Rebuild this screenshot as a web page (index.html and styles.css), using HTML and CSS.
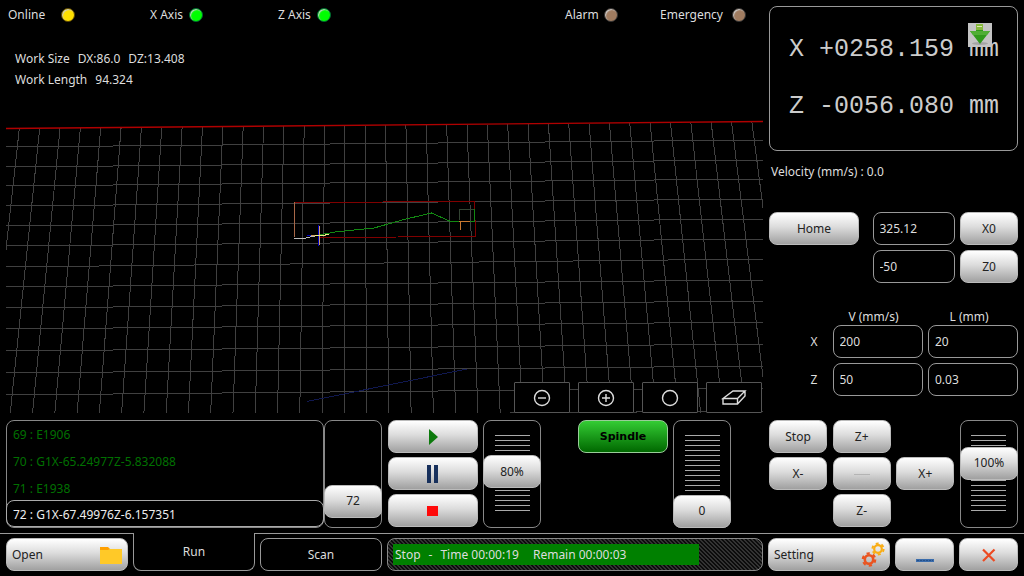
FILE: index.html
```html
<!DOCTYPE html>
<html lang="en">
<head>
<meta charset="UTF-8">
<meta name="viewport" content="width=device-width, initial-scale=1.0">
<title>Lathe Control</title>
<link rel="stylesheet" href="styles.css">
</head>
<body>

<main>
  <section class="view">
    <div class="status-bar">
      <div class="status status-online"><span>Online</span><i class="led yellow"></i></div>
      <div class="status"><span>X Axis</span><i class="led green"></i></div>
      <div class="status"><span>Z Axis</span><i class="led green"></i></div>
      <div class="status status-alarm"><span>Alarm</span><i class="led"></i></div>
      <div class="status status-emergency"><span>Emergency</span><i class="led"></i></div>
    </div>

    <div class="work-info">
      <p><span>Work Size</span><span>DX:86.0</span><span>DZ:13.408</span></p>
      <p><span>Work Length</span><span>94.324</span></p>
    </div>

    <svg class="scene" viewBox="6 116 757 297" preserveAspectRatio="none">
      <g id="grid" class="grid"></g>
      <path class="top-edge" d="M6 128.5L763 121.5"/>
      <path class="axis" d="M307 401.5L467 369"/>
      <path class="stock" d="M294.5 202.5L474.5 201.5L475.5 236.5L320 237.5"/>
      <path class="ghost" d="M459.5 220V209.5H474"/>
      <path class="stock-left" d="M294.5 202V237"/>
      <path class="done" d="M294 238H306L319 235"/>
      <path class="tool-path" d="M319 235L335 232L374 228L404 219.5L431.500 213L450.500 221.500H474.500V209"/>
      <path class="tool" d="M459 221.500H470M460.500 221V230"/>
      <path class="cursor-z" d="M307 235.500H322M318.500 225V246"/>
      <path class="cursor-x" d="M311 235.500H326M319.500 226V245"/>
      <path class="cursor-y" d="M315 235.500H321L329 234.500"/>
    </svg>

    <div class="view-tools">
      <button type="button" aria-label="Zoom out">
        <svg width="18" height="18" viewBox="0 0 18 18"><circle cx="9" cy="9" r="7.500"/><path d="M5 9H13"/></svg>
      </button>
      <button type="button" aria-label="Zoom in">
        <svg width="18" height="18" viewBox="0 0 18 18"><circle cx="9" cy="9" r="7.500"/><path d="M5 9H13M9 5V13"/></svg>
      </button>
      <button type="button" aria-label="Reset view">
        <svg width="18" height="18" viewBox="0 0 18 18"><circle cx="9" cy="9" r="7.500"/></svg>
      </button>
      <button type="button" aria-label="3D view">
        <svg width="26" height="18" viewBox="0 0 26 18"><path d="M2 9.500L12 2H24L16.500 9.500ZM2 9.500V15H16.500V9.500M16.500 15L24 7V2"/></svg>
      </button>
    </div>
  </section>

  <section class="side">
    <div class="readout">
      <p>X +0258.159 mm</p>
      <p>Z -0056.080 mm</p>
      <svg class="download" width="24" height="24" viewBox="0 0 24 24">
        <rect width="24" height="24" fill="#c4c4c4"/>
        <ellipse cx="12" cy="20.500" rx="8" ry="1.500" fill="#a4a4a4"/>
        <path d="M8 1H15V8H22L12 21L2 8H8Z" fill="#2f9a1c"/>
        <path d="M2 8H22L19 12H5Z" fill="#4fae35"/>
        <path d="M8 1H15V7H8Z" fill="#86b93c"/>
        <path d="M9 3.500H14" stroke="#dcecb0"/>
      </svg>
    </div>

    <p class="velocity">Velocity (mm/s) : 0.0</p>

    <div class="offsets">
      <button type="button" class="btn">Home</button>
      <input type="text" value="325.12" aria-label="X offset">
      <button type="button" class="btn">X0</button>
      <input type="text" class="second" value="-50" aria-label="Z offset">
      <button type="button" class="btn">Z0</button>
    </div>

    <div class="steps">
      <span class="head-v">V (mm/s)</span>
      <span>L (mm)</span>
      <label for="vx">X</label>
      <input type="text" id="vx" value="200">
      <input type="text" value="20" aria-label="X length">
      <label for="vz">Z</label>
      <input type="text" id="vz" value="50">
      <input type="text" value="0.03" aria-label="Z length">
    </div>
  </section>

  <section class="controls">
    <ol class="log">
      <li>69 : E1906</li>
      <li>70 : G1X-65.24977Z-5.832088</li>
      <li>71 : E1938</li>
      <li class="current">72 : G1X-67.49976Z-6.157351</li>
    </ol>
    <div class="slider">
      <input type="range" class="down" min="0" max="83" value="72" id="line" aria-label="Program line">
      <output for="line" style="--pos: 0.867">72</output>
    </div>
    <div class="run-buttons">
      <button type="button" class="btn" aria-label="Start">
        <svg width="20" height="20" viewBox="0 0 20 20"><path d="M6 2V18L15 10Z" fill="#0c7a0c"/></svg>
      </button>
      <button type="button" class="btn" aria-label="Pause">
        <svg width="20" height="20" viewBox="0 0 20 20"><path d="M4 1H8V19H4ZM11 1H15V19H11Z" fill="#17305c"/></svg>
      </button>
      <button type="button" class="btn" aria-label="Stop">
        <svg width="20" height="20" viewBox="0 0 20 20"><path d="M4 5H15V15H4Z" fill="#ff0a0a"/></svg>
      </button>
    </div>
    <div class="slider ticks">
      <input type="range" min="0" max="150" value="80" id="feed" aria-label="Feed rate">
      <output for="feed" style="--pos: 0.467">80%</output>
    </div>
    <button type="button" class="btn spindle">Spindle</button>
    <div class="slider ticks">
      <input type="range" min="0" max="150" value="0" id="speed" aria-label="Spindle speed">
      <output for="speed" style="--pos: 1">0</output>
    </div>
  </section>

  <section class="jog">
    <button type="button" class="btn">Stop</button>
    <button type="button" class="btn">Z+</button>
    <div class="slider ticks">
      <input type="range" min="0" max="155" value="100" id="rate" aria-label="Jog rate">
      <output for="rate" style="--pos: 0.355">100%</output>
    </div>
    <button type="button" class="btn x-minus">X-</button>
    <button type="button" class="btn step-mode" aria-label="Step mode">
      <svg width="16" height="4" viewBox="0 0 16 4"><path d="M0 2.500H16" stroke="#b4b4b4"/></svg>
    </button>
    <button type="button" class="btn x-plus">X+</button>
    <button type="button" class="btn z-minus">Z-</button>
  </section>
</main>

<footer>
  <button type="button" class="btn wide">Open
    <svg width="24" height="20" viewBox="0 0 24 20">
      <path d="M1 2H9L11 4V6H1Z" fill="#ffa000"/>
      <path d="M1 5H9L11 4H23V19H1Z" fill="#ffc928"/>
    </svg>
  </button>
  <button type="button" class="tab active">Run</button>
  <button type="button" class="tab">Scan</button>
  <div class="progress" role="progressbar" aria-valuenow="84" aria-valuemin="0" aria-valuemax="100">
    <div class="bar" style="width: 84%"><span>Stop</span><span>-</span><span>Time 00:00:19</span><span class="remain">Remain 00:00:03</span></div>
  </div>
  <button type="button" class="btn wide">Setting
    <svg width="24" height="26" viewBox="0 0 24 26">
      <g fill="none" stroke="#f9ad14">
        <circle cx="17" cy="7" r="3.800" stroke-width="2.200"/>
        <circle cx="17" cy="7" r="5.600" stroke-width="2" stroke-dasharray="2.930 2.930"/>
      </g>
      <g fill="none" stroke="#ea5420">
        <circle cx="8" cy="17.500" r="4.200" stroke-width="2.600"/>
        <circle cx="8" cy="17.500" r="6.200" stroke-width="2.200" stroke-dasharray="3.250 3.250"/>
      </g>
    </svg>
  </button>
  <button type="button" class="btn narrow" aria-label="Minimize">
    <svg width="20" height="20" viewBox="0 0 20 20"><path d="M1 14H19V17H1Z" fill="#3a6cab"/><path d="M2 15.500H18" stroke="#24508a" stroke-dasharray="2 1"/></svg>
  </button>
  <button type="button" class="btn narrow" aria-label="Close">
    <svg width="20" height="20" viewBox="0 0 20 20"><path d="M4 4.500L15.500 16M15.500 4.500L4 16" stroke="#ec4a22" stroke-width="2.200"/></svg>
  </button>
</footer>

<script>
// floor grid of the 3D view
var rows = [
  [147, 140], [167, 160], [186, 179], [206, 199], [226, 219], [246, 239], [267, 259],
  [287, 280], [308, 301], [329, 322], [351, 344], [373, 366], [395, 388], [417, 411]
];
var d = "";
for (var i = 0; i <= 36; i++) {
  var x1 = 19.3 + 20.35 * i;
  var x2 = -12 + 22.27 * i;
  d += "M" + x1 + " " + (129 - x1 / 110) + "L" + x2 + " 413";
}
for (var j = 0; j < rows.length; j++) {
  d += "M6 " + rows[j][0] + "L763 " + rows[j][1];
}
document.getElementById("grid").innerHTML = '<path d="' + d + '"/>';

// keep the thumb captions on the thumbs
document.querySelectorAll(".slider input").forEach(function (input) {
  input.addEventListener("input", function () {
    var out = input.nextElementSibling;
    var part = input.value / input.max;
    out.style.setProperty("--pos", input.classList.contains("down") ? part : 1 - part);
    out.textContent = input.value + (out.textContent.indexOf("%") > 0 ? "%" : "");
  });
});
</script>

</body>
</html>
```
FILE: styles.css
```css
* {
  box-sizing: border-box;
}
body {
  margin: 0;
  min-height: 100vh;
  display: flex;
  flex-direction: column;
  background: #000;
  color: #ddd;
  font-family: "Noto Sans", "Open Sans", sans-serif;
  font-size: 12px;
  line-height: 16px;
}
p {
  margin: 0;
}
button,
input {
  font: inherit;
  color: inherit;
}
main {
  flex: 1;
  display: grid;
  grid-template-columns: minmax(0, 1fr) 249px;
  grid-template-rows: 1fr 108px;
  gap: 7px 6px;
  padding: 0 6px 5px;
}

/* 3D view */
.view {
  position: relative;
  display: flex;
  flex-direction: column;
}
.status-bar {
  display: flex;
  gap: 75px;
  height: 29px;
  padding: 0 17px 0 2px;
}
.status {
  display: flex;
  align-items: center;
  justify-content: space-between;
  width: 53px;
  white-space: nowrap;
}
.status-online {
  width: 67px;
}
.status-alarm {
  margin-left: auto;
}
.status-emergency {
  width: 86px;
  margin-left: -33px;
}
.led {
  width: 14px;
  height: 14px;
  border: 1px solid #333;
  border-radius: 50%;
  background: #a07c60;
  box-shadow: inset 1px 1px 1px #ccc;
}
.led.yellow {
  background: #ffe000;
  border-color: #5a4500;
}
.led.green {
  background: #0f0;
  border-color: #063;
}
.work-info {
  height: 87px;
  padding: 19px 9px 0;
  line-height: 21px;
}
.work-info span {
  margin-right: 8px;
}
.scene {
  flex: 1;
  width: 100%;
  min-height: 0;
  fill: none;
  shape-rendering: crispEdges;
}
.grid {
  stroke: #404040;
}
.top-edge {
  stroke: #b00000;
  stroke-width: 1.4;
  shape-rendering: auto;
}
.axis {
  stroke: #101850;
}
.stock {
  stroke: #800000;
}
.ghost {
  stroke: #343;
}
.stock-left {
  stroke: #a86848;
}
.done {
  stroke: #bbb;
}
.tool-path {
  stroke: #128812;
}
.tool {
  stroke: #c87830;
}
.cursor-z {
  stroke: #00c;
}
.cursor-x {
  stroke: #d0a060;
}
.cursor-y {
  stroke: #ee8;
}
.view-tools {
  position: absolute;
  right: 1px;
  bottom: 0;
  display: flex;
  gap: 8px;
}
.view-tools button {
  display: flex;
  align-items: center;
  justify-content: center;
  width: 56px;
  height: 31px;
  padding: 0;
  background: #000;
  border: 1px solid #555;
  border-radius: 1px;
}
.view-tools svg {
  fill: none;
  stroke: #ddd;
  stroke-width: 1.4;
}

/* right column */
.side {
  padding-top: 6px;
}
.readout {
  position: relative;
  height: 145px;
  padding: 14px 19px;
  border: 1px solid #999;
  border-radius: 8px;
  color: #ccc;
  font-family: "Liberation Mono", monospace;
  font-size: 25px;
  line-height: 57px;
  white-space: nowrap;
}
.download {
  position: absolute;
  top: 16px;
  right: 25px;
}
.velocity {
  padding: 13px 2px 32px;
}
.btn {
  display: flex;
  align-items: center;
  justify-content: center;
  height: 33px;
  padding: 0;
  border: 1px solid #bbb;
  border-radius: 8px;
  background: linear-gradient(#fff, #dcdcdc 45%, #a0a0a0);
  color: #222;
}
input[type="text"] {
  width: 100%;
  min-width: 0;
  height: 33px;
  padding: 0 6px;
  background: #000;
  border: 1px solid #999;
  border-radius: 8px;
}
.offsets {
  display: grid;
  grid-template-columns: 98px 82px 58px;
  justify-content: space-between;
  row-gap: 5px;
}
.offsets .btn:first-child {
  width: 90px;
}
.offsets .second {
  grid-column: 2;
}
.steps {
  display: grid;
  grid-template-columns: 58px 90px 90px;
  justify-content: space-between;
  row-gap: 5px;
  margin-top: 26px;
  text-align: center;
}
.steps span {
  margin-bottom: -5px;
  padding-right: 8px;
}
.steps .head-v {
  grid-column: 2;
}
.steps label {
  padding-left: 32px;
  line-height: 33px;
}

/* program, run buttons and overrides */
.controls {
  display: flex;
  align-items: flex-start;
}
.log {
  flex: 1;
  max-width: 318px;
  height: 108px;
  margin: 0;
  padding: 0;
  list-style: none;
  border: 1px solid #888;
  border-radius: 8px;
  color: #007000;
  line-height: 27px;
  white-space: nowrap;
}
.log li {
  height: 27px;
  padding-left: 6px;
}
.log .current {
  margin: -2px -1px 0;
  border: 1px solid #aaa;
  border-radius: 8px;
  color: #eee;
}
.slider {
  position: relative;
  width: 58px;
  height: 108px;
  border: 1px solid #888;
  border-radius: 8px;
}
.ticks {
  background: repeating-linear-gradient(#aaa 0 1px, transparent 1px 5px) center 14px / 35px 76px no-repeat;
}
.slider input {
  display: block;
  width: 58px;
  height: 108px;
  margin: -1px;
  appearance: none;
  background: none;
  writing-mode: vertical-lr;
  direction: rtl;
}
.slider .down {
  direction: ltr;
}
.slider input::-webkit-slider-thumb {
  appearance: none;
  width: 58px;
  height: 33px;
  border: 1px solid #bbb;
  border-radius: 8px;
  background: linear-gradient(#fff, #dcdcdc 45%, #a0a0a0);
}
.slider output {
  position: absolute;
  left: 0;
  right: 0;
  top: calc((100% - 32px) * var(--pos));
  color: #222;
  line-height: 32px;
  text-align: center;
  pointer-events: none;
}
.run-buttons {
  display: grid;
  gap: 4px;
  width: 90px;
  margin: 0 5px 0 6px;
}
.spindle {
  width: 90px;
  margin: 0 5px 0 37px;
  border-color: #9c9;
  background: linear-gradient(#34cc34, #006800);
  color: #000;
  font-family: "DejaVu Sans", sans-serif;
  font-size: 11px;
  font-weight: bold;
}
.jog {
  display: grid;
  grid-template-columns: repeat(4, 58px);
  grid-template-rows: repeat(3, 33px);
  justify-content: space-between;
  row-gap: 4px;
}
.jog .slider {
  grid-column: 4;
  grid-row: 1 / 4;
}
.x-minus {
  grid-area: 2 / 1;
}
.step-mode {
  grid-area: 2 / 2;
}
.x-plus {
  grid-area: 2 / 3;
}
.z-minus {
  grid-area: 3 / 2;
}

/* bottom bar */
footer {
  display: flex;
  gap: 5px;
  padding: 4px 6px 5px;
  border-top: 1px solid #999;
}
.tab {
  width: 122px;
  height: 33px;
  padding: 0;
  background: #000;
  border: 1px solid #999;
  border-radius: 8px;
}
.tab.active {
  height: 38px;
  margin-top: -5px;
  border-top: 0;
  border-radius: 0 0 8px 8px;
}
.wide {
  width: 122px;
  padding: 0 4px 0 5px;
  justify-content: space-between;
}
.narrow {
  width: 59px;
}
.progress {
  flex: 1;
  height: 33px;
  padding: 5px;
  border: 1px solid #888;
  border-radius: 8px;
  background: linear-gradient(45deg, #0c0c0c 25%, #333 25% 50%, #0c0c0c 50% 75%, #333 75%) 0 0 / 4px 4px;
}
.bar {
  display: flex;
  gap: 8px;
  height: 21px;
  padding-left: 2px;
  background: #008000;
  line-height: 21px;
  white-space: nowrap;
}
.remain {
  margin-left: 6px;
}
```
